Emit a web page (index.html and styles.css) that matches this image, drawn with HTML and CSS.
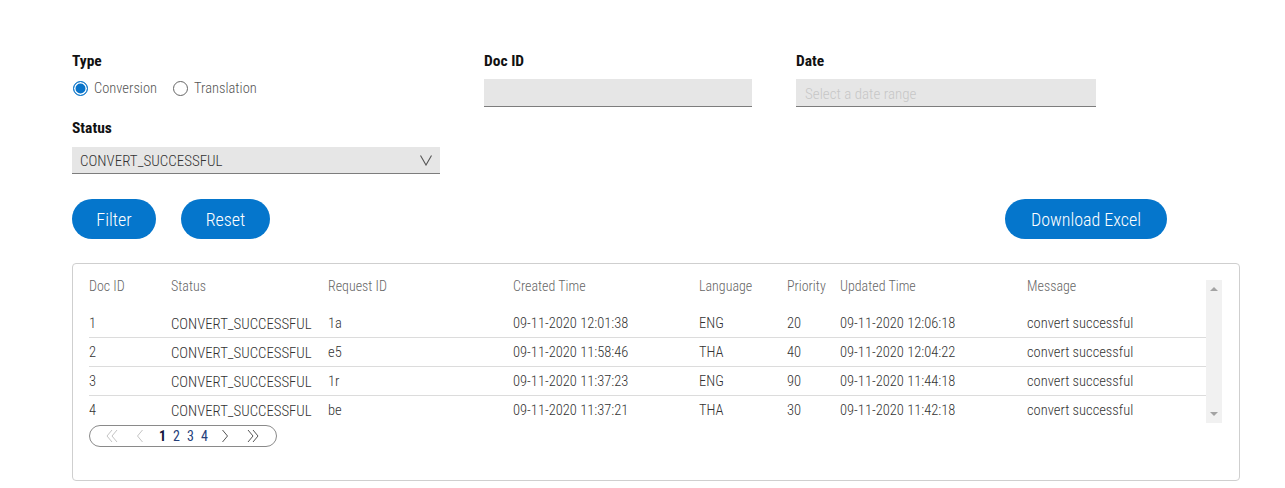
FILE: index.html
```html
<!DOCTYPE html>
<html lang="en">
<head>
<meta charset="utf-8">
<title>Documents</title>
<link rel="stylesheet" href="styles.css">
</head>
<body>
<main class="page">
  <section class="filters">
    <div class="col col-type">
      <div class="field">
        <label class="label">Type</label>
        <div class="radios">
          <label class="radio"><input type="radio" name="type" checked><span>Conversion</span></label>
          <label class="radio"><input type="radio" name="type"><span>Translation</span></label>
        </div>
      </div>
      <div class="field field-status">
        <label class="label">Status</label>
        <div class="select">
          <span>CONVERT_SUCCESSFUL</span>
          <svg class="chev" width="12" height="11" viewBox="0 0 12 11"><polyline points="0.5,0.5 6,10 11.5,0.5" fill="none" stroke="#555" stroke-width="1.1"/></svg>
        </div>
      </div>
    </div>
    <div class="col col-doc">
      <div class="field">
        <label class="label">Doc ID</label>
        <div class="input"></div>
      </div>
    </div>
    <div class="col col-date">
      <div class="field">
        <label class="label">Date</label>
        <div class="input input-date"><span class="placeholder">Select a date range</span></div>
      </div>
    </div>
  </section>

  <section class="actions">
    <div class="actions-left">
      <button class="btn btn-filter">Filter</button>
      <button class="btn btn-reset">Reset</button>
    </div>
    <button class="btn btn-download">Download Excel</button>
  </section>

  <section class="card">
    <div class="scroll">
      <div class="table-wrap">
        <table class="grid">
          <colgroup>
            <col class="c1"><col class="c2"><col class="c3"><col class="c4"><col class="c5"><col class="c6"><col class="c7"><col class="c8">
          </colgroup>
          <thead>
            <tr><th>Doc ID</th><th>Status</th><th>Request ID</th><th>Created Time</th><th>Language</th><th>Priority</th><th>Updated Time</th><th>Message</th></tr>
          </thead>
          <tbody>
            <tr><td>1</td><td class="st">CONVERT_SUCCESSFUL</td><td>1a</td><td>09-11-2020 12:01:38</td><td>ENG</td><td>20</td><td>09-11-2020 12:06:18</td><td>convert successful</td></tr>
            <tr><td>2</td><td class="st">CONVERT_SUCCESSFUL</td><td>e5</td><td>09-11-2020 11:58:46</td><td>THA</td><td>40</td><td>09-11-2020 12:04:22</td><td>convert successful</td></tr>
            <tr><td>3</td><td class="st">CONVERT_SUCCESSFUL</td><td>1r</td><td>09-11-2020 11:37:23</td><td>ENG</td><td>90</td><td>09-11-2020 11:44:18</td><td>convert successful</td></tr>
            <tr><td>4</td><td class="st">CONVERT_SUCCESSFUL</td><td>be</td><td>09-11-2020 11:37:21</td><td>THA</td><td>30</td><td>09-11-2020 11:42:18</td><td>convert successful</td></tr>
          </tbody>
        </table>
      </div>
      <div class="scrollbar">
        <svg width="16" height="16" viewBox="0 0 16 16"><polygon points="4,10 12,10 8,6" fill="#a3a3a3"/></svg>
        <svg width="16" height="16" viewBox="0 0 16 16"><polygon points="4,6 12,6 8,10" fill="#a3a3a3"/></svg>
      </div>
    </div>
    <nav class="pager">
      <span class="pg-arrow off first"><svg width="14" height="14" viewBox="0 0 14 14"><polyline points="7,1 2,7 7,13" fill="none" stroke="currentColor" stroke-width="1"/><polyline points="12,1 7,7 12,13" fill="none" stroke="currentColor" stroke-width="1"/></svg></span>
      <span class="pg-arrow off prev"><svg width="8" height="14" viewBox="0 0 8 14"><polyline points="6.5,1 1.5,7 6.5,13" fill="none" stroke="currentColor" stroke-width="1"/></svg></span>
      <span class="pg-nums"><span class="pg-num active">1</span><span class="pg-num">2</span><span class="pg-num">3</span><span class="pg-num">4</span></span>
      <span class="pg-arrow on next"><svg width="8" height="14" viewBox="0 0 8 14"><polyline points="1.5,1 6.5,7 1.5,13" fill="none" stroke="currentColor" stroke-width="1"/></svg></span>
      <span class="pg-arrow on last"><svg width="14" height="14" viewBox="0 0 14 14"><polyline points="2,1 7,7 2,13" fill="none" stroke="currentColor" stroke-width="1"/><polyline points="7,1 12,7 7,13" fill="none" stroke="currentColor" stroke-width="1"/></svg></span>
    </nav>
  </section>
</main>
</body>
</html>
```

FILE: styles.css
```css
* { box-sizing: border-box; }

html, body {
  margin: 0;
  background: #ffffff;
}

body {
  font-family: "Liberation Sans Narrow", "Roboto Condensed", "DejaVu Sans Condensed", sans-serif;
  color: #333;
  font-size: 14px;
}

.page {
  padding: 51px 0 0 72px;
  width: 1240px;
}

/* filters */
.filters {
  display: flex;
}

.col-type { width: 412px; }
.col-doc { width: 312px; }
.col-date { width: 300px; }

.field {
  display: flex;
  flex-direction: column;
}

.label {
  font-weight: bold;
  font-size: 15.5px;
  line-height: 20px;
  color: #111;
  margin-bottom: 8px;
}

.radios {
  display: flex;
  gap: 15px;
  height: 20px;
  margin-top: -1px;
}

.radio {
  display: flex;
  align-items: center;
  gap: 6px;
  font-size: 14.5px;
  font-weight: 300;
  color: #555;
}

.radio input {
  appearance: none;
  -webkit-appearance: none;
  margin: 0 0 0 1px;
  width: 15px;
  height: 15px;
  border-radius: 50%;
  border: 1px solid #666;
  background: #fff;
}

.radio input:checked {
  border-color: #0a74c9;
  background: #0a74c9;
  box-shadow: inset 0 0 0 1.5px #fff;
}

.field-status {
  margin-top: 20px;
}

.field-status .label { margin-bottom: 9px; }

.select {
  width: 368px;
  height: 27px;
  background: #e6e6e6;
  border-bottom: 1px solid #7d7d7d;
  display: flex;
  align-items: center;
  justify-content: space-between;
  padding: 1px 8px 0 8px;
  font-size: 15px;
  font-weight: 300;
  color: #333;
}

.input {
  height: 28px;
  background: #e6e6e6;
  border-bottom: 1px solid #7d7d7d;
  width: 268px;
}

.col-doc .label, .col-date .label { margin-bottom: 8px; }

.input-date {
  width: 300px;
  display: flex;
  align-items: center;
  padding: 3px 0 0 9px;
}

.placeholder {
  color: #c6c6c6;
  font-size: 15px;
  font-weight: 300;
}

/* actions */
.actions {
  display: flex;
  justify-content: space-between;
  width: 1095px;
  margin-top: 25px;
}

.actions-left {
  display: flex;
  gap: 25px;
}

.btn {
  height: 40px;
  border: none;
  border-radius: 20px;
  background: #0576cc;
  color: #fff;
  font-family: inherit;
  font-size: 18px;
  font-weight: 300;
  padding: 0;
  cursor: pointer;
}

.btn-filter { width: 84px; }
.btn-reset { width: 89px; }
.btn-download { width: 162px; }

/* card */
.card {
  margin-top: 24px;
  width: 1168px;
  height: 218px;
  border: 1px solid #cfcfcf;
  border-radius: 4px;
  padding: 14px 17px 0 16px;
}

.scroll {
  display: flex;
  height: 145px;
}

.table-wrap {
  width: 1117px;
  height: 145px;
  overflow: hidden;
}

.grid {
  width: 1117px;
  border-collapse: collapse;
  table-layout: fixed;
}

.c1 { width: 82px; }
.c2 { width: 157px; }
.c3 { width: 185px; }
.c4 { width: 186px; }
.c5 { width: 88px; }
.c6 { width: 53px; }
.c7 { width: 187px; }
.c8 { width: 179px; }

.grid th {
  text-align: left;
  font-weight: 300;
  color: #666;
  font-size: 14px;
  height: 30px;
  line-height: 14px;
  padding: 1px 0 15px 0;
  vertical-align: top;
}

.grid td {
  height: 29px;
  padding: 3px 0 0 0;
  color: #333;
  font-size: 14.5px;
  font-weight: 300;
  line-height: 16px;
  vertical-align: middle;
  white-space: nowrap;
}

.grid td.st { font-size: 14.8px; }

.grid tbody tr + tr td {
  border-top: 1px solid #dcdcdc;
}

.scrollbar {
  align-self: flex-end;
  width: 16px;
  height: 143px;
  background: #f1f1f1;
  display: flex;
  flex-direction: column;
  justify-content: space-between;
  padding: 1px 0 1px;
}

.scrollbar svg { display: block; }

/* pager */
.pager {
  margin-top: 2px;
  width: 188px;
  height: 22px;
  border: 1px solid #8a8a8a;
  border-radius: 11px;
  display: flex;
  align-items: center;
  padding-left: 15px;
}

.pg-arrow {
  display: flex;
  align-items: center;
}

.pg-arrow.off { color: #c4c4c4; }
.pg-arrow.on { color: #555; }

.pg-arrow.first { margin-right: 17px; }
.pg-arrow.prev { margin-right: 15px; }
.pg-arrow.next { margin-left: 13px; margin-right: 17px; }

.pg-nums {
  display: flex;
  gap: 7px;
  font-size: 14px;
  line-height: 16px;
}

.pg-num { color: #25407a; }
.pg-num.active { color: #14143c; font-weight: bold; }
```
